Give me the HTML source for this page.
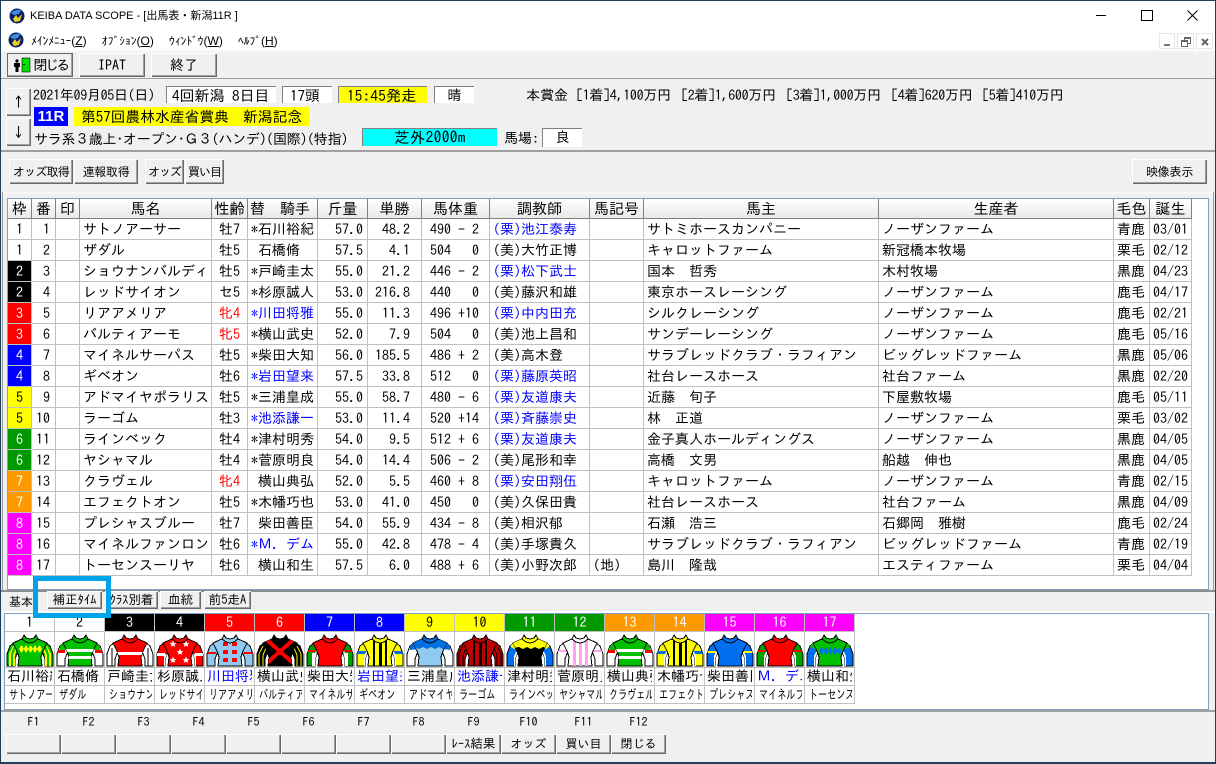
<!DOCTYPE html>
<html lang="ja"><head><meta charset="utf-8"><title>KEIBA DATA SCOPE</title>
<style>
html,body{margin:0;padding:0;width:1216px;height:764px;overflow:hidden;background:#f0f0f0}
body{position:relative;font:14px/16px "IPAGothic","Noto Sans CJK JP",monospace;color:#000}
.a{position:absolute;white-space:pre}
.pr{letter-spacing:-.3px}
.mn{position:absolute;white-space:pre;top:34px;font-size:11.500px;line-height:14px}
.mn span{font:12px/14px "Liberation Sans",sans-serif}
.bt{position:absolute;background:#f0f0f0;box-shadow:inset 1px 1px #fff,inset -1px -1px #696969,inset -2px -2px #a0a0a0;display:flex;align-items:center;justify-content:center;white-space:pre;box-sizing:border-box}
.s{font-size:12px;letter-spacing:-.3px}
.box{position:absolute;background:#fff;border-top:1px solid #808080;border-left:1px solid #808080;box-sizing:border-box;white-space:pre;line-height:17px}
.f{position:absolute;top:716px;width:55px;text-align:center;font-size:12px;line-height:13px}
.fb{top:734px;height:20px;width:55px;font-size:12px}
table{border-collapse:separate;border-spacing:0;table-layout:fixed;position:absolute}
#t{left:8px;top:199px;width:1184px;background:#fff}
#t th{height:20px;padding:0;font-weight:normal;font-size:15px;line-height:19px;box-sizing:border-box;background:linear-gradient(#fff,#e9e9e9);border-right:1px solid #808080;border-bottom:1px solid #808080;overflow:hidden;white-space:pre}
#t td{height:21px;padding:0 0 0 3px;box-sizing:border-box;border-right:1px solid #c0c0c0;border-bottom:1px solid #c0c0c0;overflow:hidden;white-space:pre;line-height:20px;text-align:left}
#t td:first-child{padding:0;text-align:center}
#t td:nth-child(2){padding:0 5px 0 0;text-align:right}
#t td:nth-child(5){padding-left:7px}
#t td:nth-child(7){padding:0 4px 0 0;text-align:right}
#t td:nth-child(8){padding:0 11px 0 0;text-align:right}
#t td:nth-child(9){padding-left:8px}
.b{color:#00f}.r{color:#f00}
.w1{background:#fff}.w2{background:#000;color:#fff}.w3{background:#f00;color:#fff}.w4{background:#00f;color:#fff}.w5{background:#ff0}.w6{background:#090;color:#fff}.w7{background:#f90;color:#fff}.w8{background:#f0f;color:#fff}
#t td.w2,#t td.w3,#t td.w4,#t td.w6,#t td.w7,#t td.w8{color:#fff}
#k{left:5px;top:614px;width:850px;background:#fff}
#k td{width:50px;box-sizing:border-box;padding:0;border-right:1px solid #c0c0c0;border-bottom:1px solid #c0c0c0;overflow:hidden;white-space:pre;position:relative}
#k tr.h td{height:18px;text-align:center;line-height:17px}
#k tr.p td{height:36px}
#k tr.j td{height:18px;padding-left:2px;line-height:17px}
#k tr.n td{height:18px;padding-left:4px;line-height:17px;font-size:13px}
#k tr.n span{display:block;transform:scaleX(.7);transform-origin:0 0}
#k tr.j td::after,#k tr.n td::after{content:"";position:absolute;right:0;top:0;bottom:0;width:2px;background:#fff}
</style></head><body>

<div class="a" style="left:0;top:0;width:1216px;height:50px;background:#fff"></div>
<div class="a" style="left:0;top:0;width:1216px;height:1px;background:#1d3f5e"></div>
<div class="a" style="left:0;top:0;width:1px;height:764px;background:#1d3f5e"></div>
<div class="a" style="left:1215px;top:0;width:1px;height:764px;background:#1d3f5e"></div>
<div class="a" style="left:0;top:762px;width:1216px;height:2px;background:#1d3f5e"></div>

<svg class="a" style="left:9px;top:8px" width="16" height="16" viewBox="0 0 16 16"><circle cx="8" cy="8" r="7.500" fill="#0b1f6a"/><path d="M2 5Q6 1 12 2L10 6 5 7Z" fill="#3d8fd8"/><path d="M4 11l3-4 2 3 4-4-2 7-5 1Z" fill="#e8d020"/></svg>
<div class="a" style="left:30px;top:9px;font:11px/14px 'Liberation Sans','Noto Sans CJK JP',sans-serif">KEIBA DATA SCOPE - [出馬表・新潟11R ]</div>
<div class="a" style="left:1096px;top:15px;width:10px;height:1px;background:#000"></div>
<div class="a" style="left:1141px;top:10px;width:10px;height:9px;border:1px solid #000"></div>
<svg class="a" style="left:1187px;top:10px" width="11" height="11"><path d="M.5.5l10 10M10.500.5l-10 10" stroke="#000" fill="none"/></svg>

<svg class="a" style="left:8px;top:32px" width="16" height="16" viewBox="0 0 16 16"><circle cx="8" cy="8" r="7.500" fill="#0b1f6a"/><path d="M2 5Q6 1 12 2L10 6 5 7Z" fill="#3d8fd8"/><path d="M4 11l3-4 2 3 4-4-2 7-5 1Z" fill="#e8d020"/></svg>
<div class="mn" style="left:31px">ﾒｲﾝﾒﾆｭｰ<span>(<u>Z</u>)</span></div>
<div class="mn" style="left:102px">ｵﾌﾟｼｮﾝ<span>(<u>O</u>)</span></div>
<div class="mn" style="left:169px">ｳｨﾝﾄﾞｳ<span>(<u>W</u>)</span></div>
<div class="mn" style="left:238px">ﾍﾙﾌﾟ<span>(<u>H</u>)</span></div>
<div class="a" style="left:1159px;top:33px;width:16px;height:16px;border:1px solid #dfe6ec;box-sizing:border-box"><div class="a" style="left:4px;top:10px;width:6px;height:2px;background:#777"></div></div>
<div class="a" style="left:1177px;top:33px;width:17px;height:16px;border:1px solid #dfe6ec;box-sizing:border-box"><div class="a" style="left:6px;top:3px;width:5px;height:4px;border:1px solid #666;border-top-width:2px"></div><div class="a" style="left:3px;top:6px;width:5px;height:4px;border:1px solid #666;border-top-width:2px;background:#fff"></div></div>
<div class="a" style="left:1196px;top:33px;width:17px;height:16px;border:1px solid #dfe6ec;box-sizing:border-box"><svg class="a" style="left:4px;top:4px" width="8" height="8"><path d="M1 1l6 6M7 1l-6 6" stroke="#666" stroke-width="2" fill="none"/></svg></div>

<div class="a" style="left:1px;top:50px;width:1214px;height:2px;background:#f7f7f7"></div>
<div class="a" style="left:1px;top:78px;width:1214px;height:1px;background:#a0a0a0"></div>
<div class="a" style="left:1px;top:150px;width:1214px;height:2px;background:#a0a0a0"></div>
<div class="a" style="left:1px;top:192px;width:1214px;height:2px;background:#f8f8f8"></div>
<div class="a" style="left:1213px;top:192px;width:1px;height:398px;background:#9a9a9a"></div>
<div class="a" style="left:2px;top:192px;width:1px;height:398px;background:#9a9a9a"></div>

<div class="bt" style="left:7px;top:53px;width:66px;height:24px;outline:1px solid #696969;outline-offset:-1px;padding-left:21px;letter-spacing:-2.500px">閉じる</div>
<svg class="a" style="left:13px;top:57px" width="18" height="16" viewBox="0 0 18 16"><circle cx="4" cy="4" r="1.600" fill="#000"/><path d="M1 6h6v4H5.500v5h-3v-5H1Z" fill="#000"/><rect x="9" y="1" width="8" height="14" fill="#00e000" stroke="#000" stroke-width=".6"/><rect x="10" y="7" width="2" height="1" fill="#000"/></svg>
<div class="bt" style="left:79px;top:53px;width:66px;height:24px">IPAT</div>
<div class="bt" style="left:151px;top:53px;width:66px;height:24px">終了</div>

<div class="bt" style="left:6px;top:88px;width:25px;height:28px">↑</div>
<div class="bt" style="left:6px;top:118px;width:25px;height:28px">↓</div>
<div class="a pr" style="left:33px;top:87px">2021年09月05日(日)</div>
<div class="box" style="left:166px;top:86px;width:110px;height:17px;padding-left:5px;font-size:15px">4回新潟 8日目</div>
<div class="box" style="left:282px;top:86px;width:50px;height:17px;padding-left:7px;font-size:15px">17頭</div>
<div class="box" style="left:338px;top:86px;width:89px;height:17px;padding-left:8px;background:#ff0;font-size:15px;letter-spacing:.3px">15:45発走</div>
<div class="box" style="left:434px;top:86px;width:40px;height:17px;text-align:center">晴</div>
<div class="a" style="left:526px;top:87px">本賞金</div>
<div class="a pr" style="left:576px;top:87px">[1着]4,100万円</div>
<div class="a pr" style="left:681px;top:87px">[2着]1,600万円</div>
<div class="a pr" style="left:786px;top:87px">[3着]1,000万円</div>
<div class="a pr" style="left:891px;top:87px">[4着]620万円</div>
<div class="a pr" style="left:982px;top:87px">[5着]410万円</div>
<div class="a" style="left:34px;top:107px;width:34px;height:19px;background:#00f;color:#fff;text-align:center;font:bold 15px/19px 'Liberation Sans',sans-serif">11R</div>
<div class="a" style="left:74px;top:107px;width:235px;height:19px;background:#ff0"></div>
<div class="a" style="left:81px;top:107px;font-size:14.800px;line-height:19px">第57回農林水産省賞典</div>
<div class="a" style="left:243px;top:107px;font-size:14.800px;line-height:19px">新潟記念</div>
<div class="a pr" style="left:34px;top:131px">サラ系３歳上･オープン･Ｇ３(ハンデ)(国際)(特指)</div>
<div class="box" style="left:362px;top:128px;width:135px;height:18px;background:#0ff;padding-left:31px;font-size:15.500px;letter-spacing:.3px">芝外2000m</div>
<div class="a" style="left:504px;top:130px">馬場:</div>
<div class="box" style="left:542px;top:128px;width:40px;height:19px;text-align:center">良</div>

<div class="bt s" style="left:9px;top:159px;width:64px;height:25px;letter-spacing:-.8px">オッズ取得</div>
<div class="bt s" style="left:74px;top:159px;width:64px;height:25px">連報取得</div>
<div class="bt s" style="left:145px;top:159px;width:39px;height:25px;letter-spacing:-1.200px">オッズ</div>
<div class="bt s" style="left:185px;top:159px;width:39px;height:25px;letter-spacing:-1px">買い目</div>
<div class="bt s" style="left:1132px;top:159px;width:75px;height:25px">映像表示</div>

<div class="a" style="left:7px;top:198px;width:1200px;height:390px;background:#fff;border:1px solid #7fa0bf"></div>
<table id="t"><colgroup><col style="width:24px"><col style="width:24px"><col style="width:24px"><col style="width:132px"><col style="width:36px"><col style="width:70px"><col style="width:50px"><col style="width:54px"><col style="width:68px"><col style="width:100px"><col style="width:54px"><col style="width:235px"><col style="width:235px"><col style="width:36px"><col style="width:42px"></colgroup>
<tr><th>枠</th><th>番</th><th>印</th><th>馬名</th><th>性齢</th><th style="text-align:left;padding-left:2px">替  騎手</th><th>斤量</th><th>単勝</th><th>馬体重</th><th>調教師</th><th>馬記号</th><th>馬主</th><th>生産者</th><th>毛色</th><th>誕生</th></tr>
<tr><td class="w1">1</td><td>1</td><td></td><td>サトノアーサー</td><td>牡7</td><td>*石川裕紀</td><td>57.0</td><td>48.2</td><td>490 - 2</td><td class="b">(栗)池江泰寿</td><td></td><td>サトミホースカンパニー</td><td>ノーザンファーム</td><td>青鹿</td><td>03/01</td></tr>
<tr><td class="w1">1</td><td>2</td><td></td><td>ザダル</td><td>牡5</td><td> 石橋脩</td><td>57.5</td><td>4.1</td><td>504   0</td><td>(美)大竹正博</td><td></td><td>キャロットファーム</td><td>新冠橋本牧場</td><td>栗毛</td><td>02/12</td></tr>
<tr><td class="w2">2</td><td>3</td><td></td><td>ショウナンバルディ</td><td>牡5</td><td>*戸崎圭太</td><td>55.0</td><td>21.2</td><td>446 - 2</td><td class="b">(栗)松下武士</td><td></td><td>国本　哲秀</td><td>木村牧場</td><td>黒鹿</td><td>04/23</td></tr>
<tr><td class="w2">2</td><td>4</td><td></td><td>レッドサイオン</td><td>セ5</td><td>*杉原誠人</td><td>53.0</td><td>216.8</td><td>440   0</td><td>(美)藤沢和雄</td><td></td><td>東京ホースレーシング</td><td>ノーザンファーム</td><td>鹿毛</td><td>04/17</td></tr>
<tr><td class="w3">3</td><td>5</td><td></td><td>リアアメリア</td><td class="r">牝4</td><td class="b">*川田将雅</td><td>55.0</td><td>11.3</td><td>496 +10</td><td class="b">(栗)中内田充</td><td></td><td>シルクレーシング</td><td>ノーザンファーム</td><td>鹿毛</td><td>02/21</td></tr>
<tr><td class="w3">3</td><td>6</td><td></td><td>バルティアーモ</td><td class="r">牝5</td><td>*横山武史</td><td>52.0</td><td>7.9</td><td>504   0</td><td>(美)池上昌和</td><td></td><td>サンデーレーシング</td><td>ノーザンファーム</td><td>鹿毛</td><td>05/16</td></tr>
<tr><td class="w4">4</td><td>7</td><td></td><td>マイネルサーパス</td><td>牡5</td><td>*柴田大知</td><td>56.0</td><td>185.5</td><td>486 + 2</td><td>(美)高木登</td><td></td><td>サラブレッドクラブ・ラフィアン</td><td>ビッグレッドファーム</td><td>黒鹿</td><td>05/06</td></tr>
<tr><td class="w4">4</td><td>8</td><td></td><td>ギベオン</td><td>牡6</td><td class="b">*岩田望来</td><td>57.5</td><td>33.8</td><td>512   0</td><td class="b">(栗)藤原英昭</td><td></td><td>社台レースホース</td><td>社台ファーム</td><td>黒鹿</td><td>02/20</td></tr>
<tr><td class="w5">5</td><td>9</td><td></td><td>アドマイヤポラリス</td><td>牡5</td><td>*三浦皇成</td><td>55.0</td><td>58.7</td><td>480 - 6</td><td class="b">(栗)友道康夫</td><td></td><td>近藤　旬子</td><td>下屋敷牧場</td><td>鹿毛</td><td>05/11</td></tr>
<tr><td class="w5">5</td><td>10</td><td></td><td>ラーゴム</td><td>牡3</td><td class="b">*池添謙一</td><td>53.0</td><td>11.4</td><td>520 +14</td><td class="b">(栗)斉藤崇史</td><td></td><td>林　正道</td><td>ノーザンファーム</td><td>栗毛</td><td>03/02</td></tr>
<tr><td class="w6">6</td><td>11</td><td></td><td>ラインベック</td><td>牡4</td><td>*津村明秀</td><td>54.0</td><td>9.5</td><td>512 + 6</td><td class="b">(栗)友道康夫</td><td></td><td>金子真人ホールディングス</td><td>ノーザンファーム</td><td>黒鹿</td><td>04/05</td></tr>
<tr><td class="w6">6</td><td>12</td><td></td><td>ヤシャマル</td><td>牡4</td><td>*菅原明良</td><td>54.0</td><td>14.4</td><td>506 - 2</td><td>(美)尾形和幸</td><td></td><td>高橋　文男</td><td>船越　伸也</td><td>黒鹿</td><td>04/05</td></tr>
<tr><td class="w7">7</td><td>13</td><td></td><td>クラヴェル</td><td class="r">牝4</td><td> 横山典弘</td><td>52.0</td><td>5.5</td><td>460 + 8</td><td class="b">(栗)安田翔伍</td><td></td><td>キャロットファーム</td><td>ノーザンファーム</td><td>青鹿</td><td>02/15</td></tr>
<tr><td class="w7">7</td><td>14</td><td></td><td>エフェクトオン</td><td>牡5</td><td>*木幡巧也</td><td>53.0</td><td>41.0</td><td>450   0</td><td>(美)久保田貴</td><td></td><td>社台レースホース</td><td>社台ファーム</td><td>黒鹿</td><td>04/09</td></tr>
<tr><td class="w8">8</td><td>15</td><td></td><td>プレシャスブルー</td><td>牡7</td><td> 柴田善臣</td><td>54.0</td><td>55.9</td><td>434 - 8</td><td>(美)相沢郁</td><td></td><td>石瀬　浩三</td><td>石郷岡　雅樹</td><td>鹿毛</td><td>02/24</td></tr>
<tr><td class="w8">8</td><td>16</td><td></td><td>マイネルファンロン</td><td>牡6</td><td class="b">*Ｍ．デム</td><td>55.0</td><td>42.8</td><td>478 - 4</td><td>(美)手塚貴久</td><td></td><td>サラブレッドクラブ・ラフィアン</td><td>ビッグレッドファーム</td><td>青鹿</td><td>02/19</td></tr>
<tr><td class="w8">8</td><td>17</td><td></td><td>トーセンスーリヤ</td><td>牡6</td><td> 横山和生</td><td>57.5</td><td>6.0</td><td>488 + 6</td><td>(美)小野次郎</td><td>(地)</td><td>島川　隆哉</td><td>エスティファーム</td><td>栗毛</td><td>04/04</td></tr>
</table>

<div class="a" style="left:1px;top:590px;width:1214px;height:2px;background:#8c8c8c"></div>

<div class="a" style="left:9px;top:594px;font-size:12px">基本</div>
<div class="bt" style="left:47px;top:591px;width:55px;height:18px;font-size:12.500px">補正ﾀｲﾑ</div>
<div class="bt" style="left:105px;top:591px;width:53px;height:18px;font-size:12.500px">ｸﾗｽ別着</div>
<div class="bt" style="left:160px;top:591px;width:41px;height:18px;font-size:12.500px">血統</div>
<div class="bt" style="left:204px;top:591px;width:47px;height:18px;font-size:12.500px">前5走A</div>

<div class="a" style="left:1px;top:611px;width:1214px;height:2px;background:#fff"></div>
<div class="a" style="left:4px;top:613px;width:1203px;height:95px;background:#fff;border:1px solid #7fa0bf"></div>
<table id="k"><colgroup><col style="width:50px"><col style="width:50px"><col style="width:50px"><col style="width:50px"><col style="width:50px"><col style="width:50px"><col style="width:50px"><col style="width:50px"><col style="width:50px"><col style="width:50px"><col style="width:50px"><col style="width:50px"><col style="width:50px"><col style="width:50px"><col style="width:50px"><col style="width:50px"><col style="width:50px"></colgroup>
<tr class="h"><td class="w1">1</td><td class="w1">2</td><td class="w2">3</td><td class="w2">4</td><td class="w3">5</td><td class="w3">6</td><td class="w4">7</td><td class="w4">8</td><td class="w5">9</td><td class="w5">10</td><td class="w6">11</td><td class="w6">12</td><td class="w7">13</td><td class="w7">14</td><td class="w8">15</td><td class="w8">16</td><td class="w8">17</td></tr>
<tr class="p"><td></td><td></td><td></td><td></td><td></td><td></td><td></td><td></td><td></td><td></td><td></td><td></td><td></td><td></td><td></td><td></td><td></td></tr>
<tr class="j"><td>石川裕紀</td><td>石橋脩</td><td>戸崎圭太</td><td>杉原誠人</td><td class="b">川田将雅</td><td>横山武史</td><td>柴田大知</td><td class="b">岩田望来</td><td>三浦皇成</td><td class="b">池添謙一</td><td>津村明秀</td><td>菅原明良</td><td>横山典弘</td><td>木幡巧也</td><td>柴田善臣</td><td class="b">Ｍ．デム</td><td>横山和生</td></tr>
<tr class="n"><td><span>サトノアーサー</span></td><td><span>ザダル</span></td><td><span>ショウナンバルディ</span></td><td><span>レッドサイオン</span></td><td><span>リアアメリア</span></td><td><span>バルティアーモ</span></td><td><span>マイネルサーパス</span></td><td><span>ギベオン</span></td><td><span>アドマイヤポラリス</span></td><td><span>ラーゴム</span></td><td><span>ラインベック</span></td><td><span>ヤシャマル</span></td><td><span>クラヴェル</span></td><td><span>エフェクトオン</span></td><td><span>プレシャスブルー</span></td><td><span>マイネルファンロン</span></td><td><span>トーセンスーリヤ</span></td></tr>
</table>

<svg class="a" style="left:5px;top:632px" width="850" height="35" viewBox="0 0 850 35" shape-rendering="crispEdges">
<defs>
<path id="sb" d="M8,11 L19,6 L21,8 L25,9 L29,8 L31,6 L42,11 L38,19 L36,25 L37,34 L13,34 L14,25 L12,19Z"/>
<path id="sl" d="M10,10 L5,14 L2,22 L2,34 L10,34 L10,27 L13,19 L11,11Z"/>
<path id="sr" d="M40,10 L45,14 L48,22 L48,34 L40,34 L40,27 L37,19 L39,11Z"/>
<path id="co" d="M19,3 L21,6 L25,7 L29,6 L31,3 L33,7 L29,10 L25,11 L21,10 L17,7Z"/>
<clipPath id="cb"><use href="#sb"/></clipPath>
<clipPath id="cs"><use href="#sl"/><use href="#sr"/></clipPath>
<g id="dm"><path d="M16.500,13l2.500,4-2.500,4-2.500-4Z"/><path d="M21,13l2.500,4-2.500,4-2.500-4Z"/><path d="M25.500,13l2.500,4-2.500,4-2.500-4Z"/><path d="M30,13l2.500,4-2.500,4-2.500-4Z"/><path d="M34.500,13l2.500,4-2.500,4-2.500-4Z"/></g>
<path id="st" d="M0,-3.500L1,-1 3.500,-1 1.500,.6 2.200,3 0,1.600 -2.200,3 -1.500,.6 -3.500,-1 -1,-1Z"/>
</defs>
<g stroke="#000" stroke-width="1" stroke-linejoin="miter">
<g><use href="#sl" fill="#00c000"/><use href="#sr" fill="#00c000"/><g clip-path="url(#cs)" stroke="none" fill="#ff0"><path d="M4,34V22L8,14h1L6,22V34ZM8,34V23L11,16l1,1-2,6V34ZM46,34V22L42,14h-1l3,8V34ZM42,34V23L39,16l-1,1 2,6V34Z"/></g><use href="#sb" fill="#00c000"/><use href="#dm" fill="#ff0" stroke="none"/><use href="#co" fill="#00c000"/></g>
<g transform="translate(50)"><use href="#sl" fill="#fff"/><use href="#sr" fill="#fff"/><g clip-path="url(#cs)" stroke="none"><rect x="2" y="18" width="8" height="3" fill="#f00"/><rect x="40" y="18" width="8" height="3" fill="#f00"/><path d="M5,14L10,10 13,19 12,18H5ZM45,14L40,10 37,19 38,18H45Z" fill="#00c000"/></g><use href="#sb" fill="#00c000"/><g clip-path="url(#cb)" stroke="none" fill="#fff"><rect x="8" y="17" width="34" height="3"/><rect x="8" y="24" width="34" height="3"/></g><use href="#co" fill="#00c000"/></g>
<g transform="translate(100)"><use href="#sl" fill="#fff"/><use href="#sr" fill="#fff"/><path d="M7,16V34M43,16V34" stroke="#000" fill="none"/><use href="#sb" fill="#f00"/><g clip-path="url(#cb)" stroke="none" fill="#fff"><rect x="8" y="20" width="34" height="3"/></g><use href="#co" fill="#f00"/></g>
<g transform="translate(150)"><use href="#sl" fill="#f00"/><use href="#sr" fill="#f00"/><g clip-path="url(#cs)" stroke="none" fill="#fff"><rect x="2" y="21" width="8" height="3"/><rect x="40" y="21" width="8" height="3"/><rect x="9" y="22" width="3" height="12" fill="#fff"/><rect x="38" y="22" width="3" height="12" fill="#fff"/></g><use href="#sb" fill="#f00"/><g fill="#fff" stroke="none"><use href="#st" x="18" y="12"/><use href="#st" x="31" y="12"/><use href="#st" x="25" y="20"/><use href="#st" x="18" y="28"/><use href="#st" x="31" y="28"/></g><use href="#co" fill="#f00"/></g>
<g transform="translate(200)"><use href="#sl" fill="#90caf0"/><use href="#sr" fill="#90caf0"/><g clip-path="url(#cs)" stroke="none" fill="#f00"><rect x="2" y="20" width="9" height="2"/><rect x="39" y="20" width="9" height="2"/></g><use href="#sb" fill="#90caf0"/><g fill="#f00" stroke="none"><rect x="18" y="10" width="5" height="4" rx="1"/><rect x="27" y="10" width="5" height="4" rx="1"/><rect x="18" y="18" width="5" height="4" rx="1"/><rect x="27" y="18" width="5" height="4" rx="1"/><rect x="18" y="26" width="5" height="4" rx="1"/><rect x="27" y="26" width="5" height="4" rx="1"/></g><use href="#co" fill="#90caf0"/></g>
<g transform="translate(250)"><use href="#sl" fill="#000"/><use href="#sr" fill="#000"/><path d="M4,34V22L8,14M8,34V23L11,16M46,34V22L42,14M42,34V23L39,16" stroke="#ff0" fill="none"/><use href="#sb" fill="#000"/><g clip-path="url(#cb)" fill="none" stroke="#f00" stroke-width="4"><path d="M12,8L38,31M38,8L12,31"/></g><use href="#co" fill="#000"/></g>
<g transform="translate(300)"><use href="#sl" fill="#00a000"/><use href="#sr" fill="#00a000"/><g clip-path="url(#cs)" stroke="none" fill="#f00"><rect x="2" y="18" width="9" height="2"/><rect x="39" y="18" width="9" height="2"/><path d="M7,34V21h3l2-4-1,9-1,8ZM43,34V21h-3l-2-4 1,9 1,8Z" fill="#fff"/></g><use href="#sb" fill="#f00"/><use href="#co" fill="#f00"/></g>
<g transform="translate(350)"><use href="#sl" fill="#ff0"/><use href="#sr" fill="#ff0"/><g clip-path="url(#cs)" stroke="none"><rect x="2" y="19" width="9" height="3" fill="#0070e0"/><rect x="39" y="19" width="9" height="3" fill="#0070e0"/><path d="M9,34V24L12,18l1,2-2,6V34ZM41,34V24L38,18l-1,2 2,6V34Z" fill="#fff"/></g><use href="#sb" fill="#ff0"/><g clip-path="url(#cb)" stroke="none" fill="#000"><rect x="18" y="6" width="2" height="28"/><rect x="24" y="6" width="3" height="28"/><rect x="30" y="6" width="2" height="28"/></g><use href="#co" fill="#ff0"/></g>
<g transform="translate(400)"><use href="#sl" fill="#fff"/><use href="#sr" fill="#fff"/><path d="M5,14L10,10 12,17 5,18ZM45,14L40,10 38,17 45,18Z" fill="#0070e0" stroke="none"/><use href="#sb" fill="#90caf0"/><g clip-path="url(#cb)" stroke="none" fill="#0070e0"><path d="M8,6H42V15L38,17 34,15 30,17 26,15 22,17 18,15 14,17 8,15Z"/></g><use href="#co" fill="#0070e0"/></g>
<g transform="translate(450)"><use href="#sl" fill="#c00000"/><use href="#sr" fill="#c00000"/><path d="M4,34V22L8,14M8,34V23L11,16M46,34V22L42,14M42,34V23L39,16" stroke="#000" fill="none"/><use href="#sb" fill="#c00000"/><g clip-path="url(#cb)" stroke="none" fill="#000"><rect x="18" y="6" width="2" height="28"/><rect x="24" y="6" width="3" height="28"/><rect x="30" y="6" width="2" height="28"/></g><use href="#co" fill="#c00000"/></g>
<g transform="translate(500)"><use href="#sl" fill="#0070f0"/><use href="#sr" fill="#0070f0"/><path d="M5,14L10,10 13,15 9,17ZM45,14L40,10 37,15 41,17Z" fill="#ff0" stroke="none"/><g clip-path="url(#cs)" stroke="none" fill="#fff"><path d="M9,34V24L12,18l1,2-2,6V34ZM41,34V24L38,18l-1,2 2,6V34Z"/></g><use href="#sb" fill="#000"/><g clip-path="url(#cb)" stroke="none" fill="#ff0"><path d="M8,6H42V16L38,15 34,17 30,15 26,17 22,15 18,17 14,15 8,16Z"/></g><use href="#co" fill="#ff0"/></g>
<g transform="translate(550)"><use href="#sl" fill="#fff"/><use href="#sr" fill="#fff"/><g clip-path="url(#cs)" stroke="none" fill="#ffa0f0"><rect x="2" y="18" width="9" height="2"/><rect x="39" y="18" width="9" height="2"/></g><use href="#sb" fill="#fff"/><g clip-path="url(#cb)" stroke="none" fill="#ffa0f0"><rect x="18" y="6" width="3" height="28"/><rect x="24" y="6" width="3" height="28"/><rect x="30" y="6" width="3" height="28"/></g><use href="#co" fill="#fff"/></g>
<g transform="translate(600)"><use href="#sl" fill="#fff"/><use href="#sr" fill="#fff"/><g clip-path="url(#cs)" stroke="none"><rect x="2" y="18" width="8" height="3" fill="#f00"/><rect x="40" y="18" width="8" height="3" fill="#f00"/><path d="M5,14L10,10 13,19 12,18H5ZM45,14L40,10 37,19 38,18H45Z" fill="#00c000"/></g><use href="#sb" fill="#00c000"/><g clip-path="url(#cb)" stroke="none" fill="#fff"><rect x="8" y="17" width="34" height="3"/><rect x="8" y="24" width="34" height="3"/></g><use href="#co" fill="#00c000"/></g>
<g transform="translate(650)"><use href="#sl" fill="#ff0"/><use href="#sr" fill="#ff0"/><g clip-path="url(#cs)" stroke="none"><rect x="2" y="19" width="9" height="3" fill="#0070e0"/><rect x="39" y="19" width="9" height="3" fill="#0070e0"/><path d="M9,34V24L12,18l1,2-2,6V34ZM41,34V24L38,18l-1,2 2,6V34Z" fill="#fff"/></g><use href="#sb" fill="#ff0"/><g clip-path="url(#cb)" stroke="none" fill="#000"><rect x="18" y="6" width="2" height="28"/><rect x="24" y="6" width="3" height="28"/><rect x="30" y="6" width="2" height="28"/></g><use href="#co" fill="#ff0"/></g>
<g transform="translate(700)"><use href="#sl" fill="#0070f0"/><use href="#sr" fill="#0070f0"/><g clip-path="url(#cs)" stroke="none"><rect x="2" y="19" width="9" height="2" fill="#ff0"/><rect x="39" y="19" width="9" height="2" fill="#ff0"/><path d="M9,34V24L12,18l1,2-2,6V34ZM41,34V24L38,18l-1,2 2,6V34Z" fill="#fff"/></g><use href="#sb" fill="#0070f0"/><use href="#co" fill="#0070f0"/></g>
<g transform="translate(750)"><use href="#sl" fill="#00a000"/><use href="#sr" fill="#00a000"/><g clip-path="url(#cs)" stroke="none"><rect x="2" y="18" width="9" height="2" fill="#f00"/><rect x="39" y="18" width="9" height="2" fill="#f00"/><path d="M9,34V24L12,18l1,2-2,6V34ZM41,34V24L38,18l-1,2 2,6V34Z" fill="#fff"/></g><use href="#sb" fill="#f00"/><use href="#co" fill="#f00"/></g>
<g transform="translate(800)"><use href="#sl" fill="#0070f0"/><use href="#sr" fill="#0070f0"/><path d="M5,14L10,10 13,17 6,16ZM45,14L40,10 37,17 44,16Z" fill="#00c000" stroke="none"/><g clip-path="url(#cs)" stroke="none" fill="#fff"><path d="M9,34V24L12,18l1,2-2,6V34ZM41,34V24L38,18l-1,2 2,6V34Z"/></g><use href="#sb" fill="#00c000"/><use href="#dm" fill="#0070f0" stroke="none" y="2"/><use href="#co" fill="#00c000"/></g>
</g></svg>

<div class="a" style="left:1px;top:710px;width:1214px;height:2px;background:#a0a0a0"></div>
<div class="f" style="left:6px">F1</div><div class="f" style="left:61px">F2</div><div class="f" style="left:116px">F3</div><div class="f" style="left:171px">F4</div><div class="f" style="left:226px">F5</div><div class="f" style="left:281px">F6</div><div class="f" style="left:336px">F7</div><div class="f" style="left:391px">F8</div><div class="f" style="left:446px">F9</div><div class="f" style="left:501px">F10</div><div class="f" style="left:556px">F11</div><div class="f" style="left:611px">F12</div>
<div class="bt fb" style="left:6px"></div><div class="bt fb" style="left:61px"></div><div class="bt fb" style="left:116px"></div><div class="bt fb" style="left:171px"></div><div class="bt fb" style="left:226px"></div><div class="bt fb" style="left:281px"></div><div class="bt fb" style="left:336px"></div><div class="bt fb" style="left:391px"></div>
<div class="bt fb" style="left:446px;font-size:12.500px">ﾚｰｽ結果</div><div class="bt fb" style="left:501px">オッズ</div><div class="bt fb" style="left:556px">買い目</div><div class="bt fb" style="left:611px">閉じる</div>

<div class="a" style="left:33px;top:576px;width:78px;height:42px;border:5px solid #00a2e8;box-sizing:border-box"></div>
</body></html>
